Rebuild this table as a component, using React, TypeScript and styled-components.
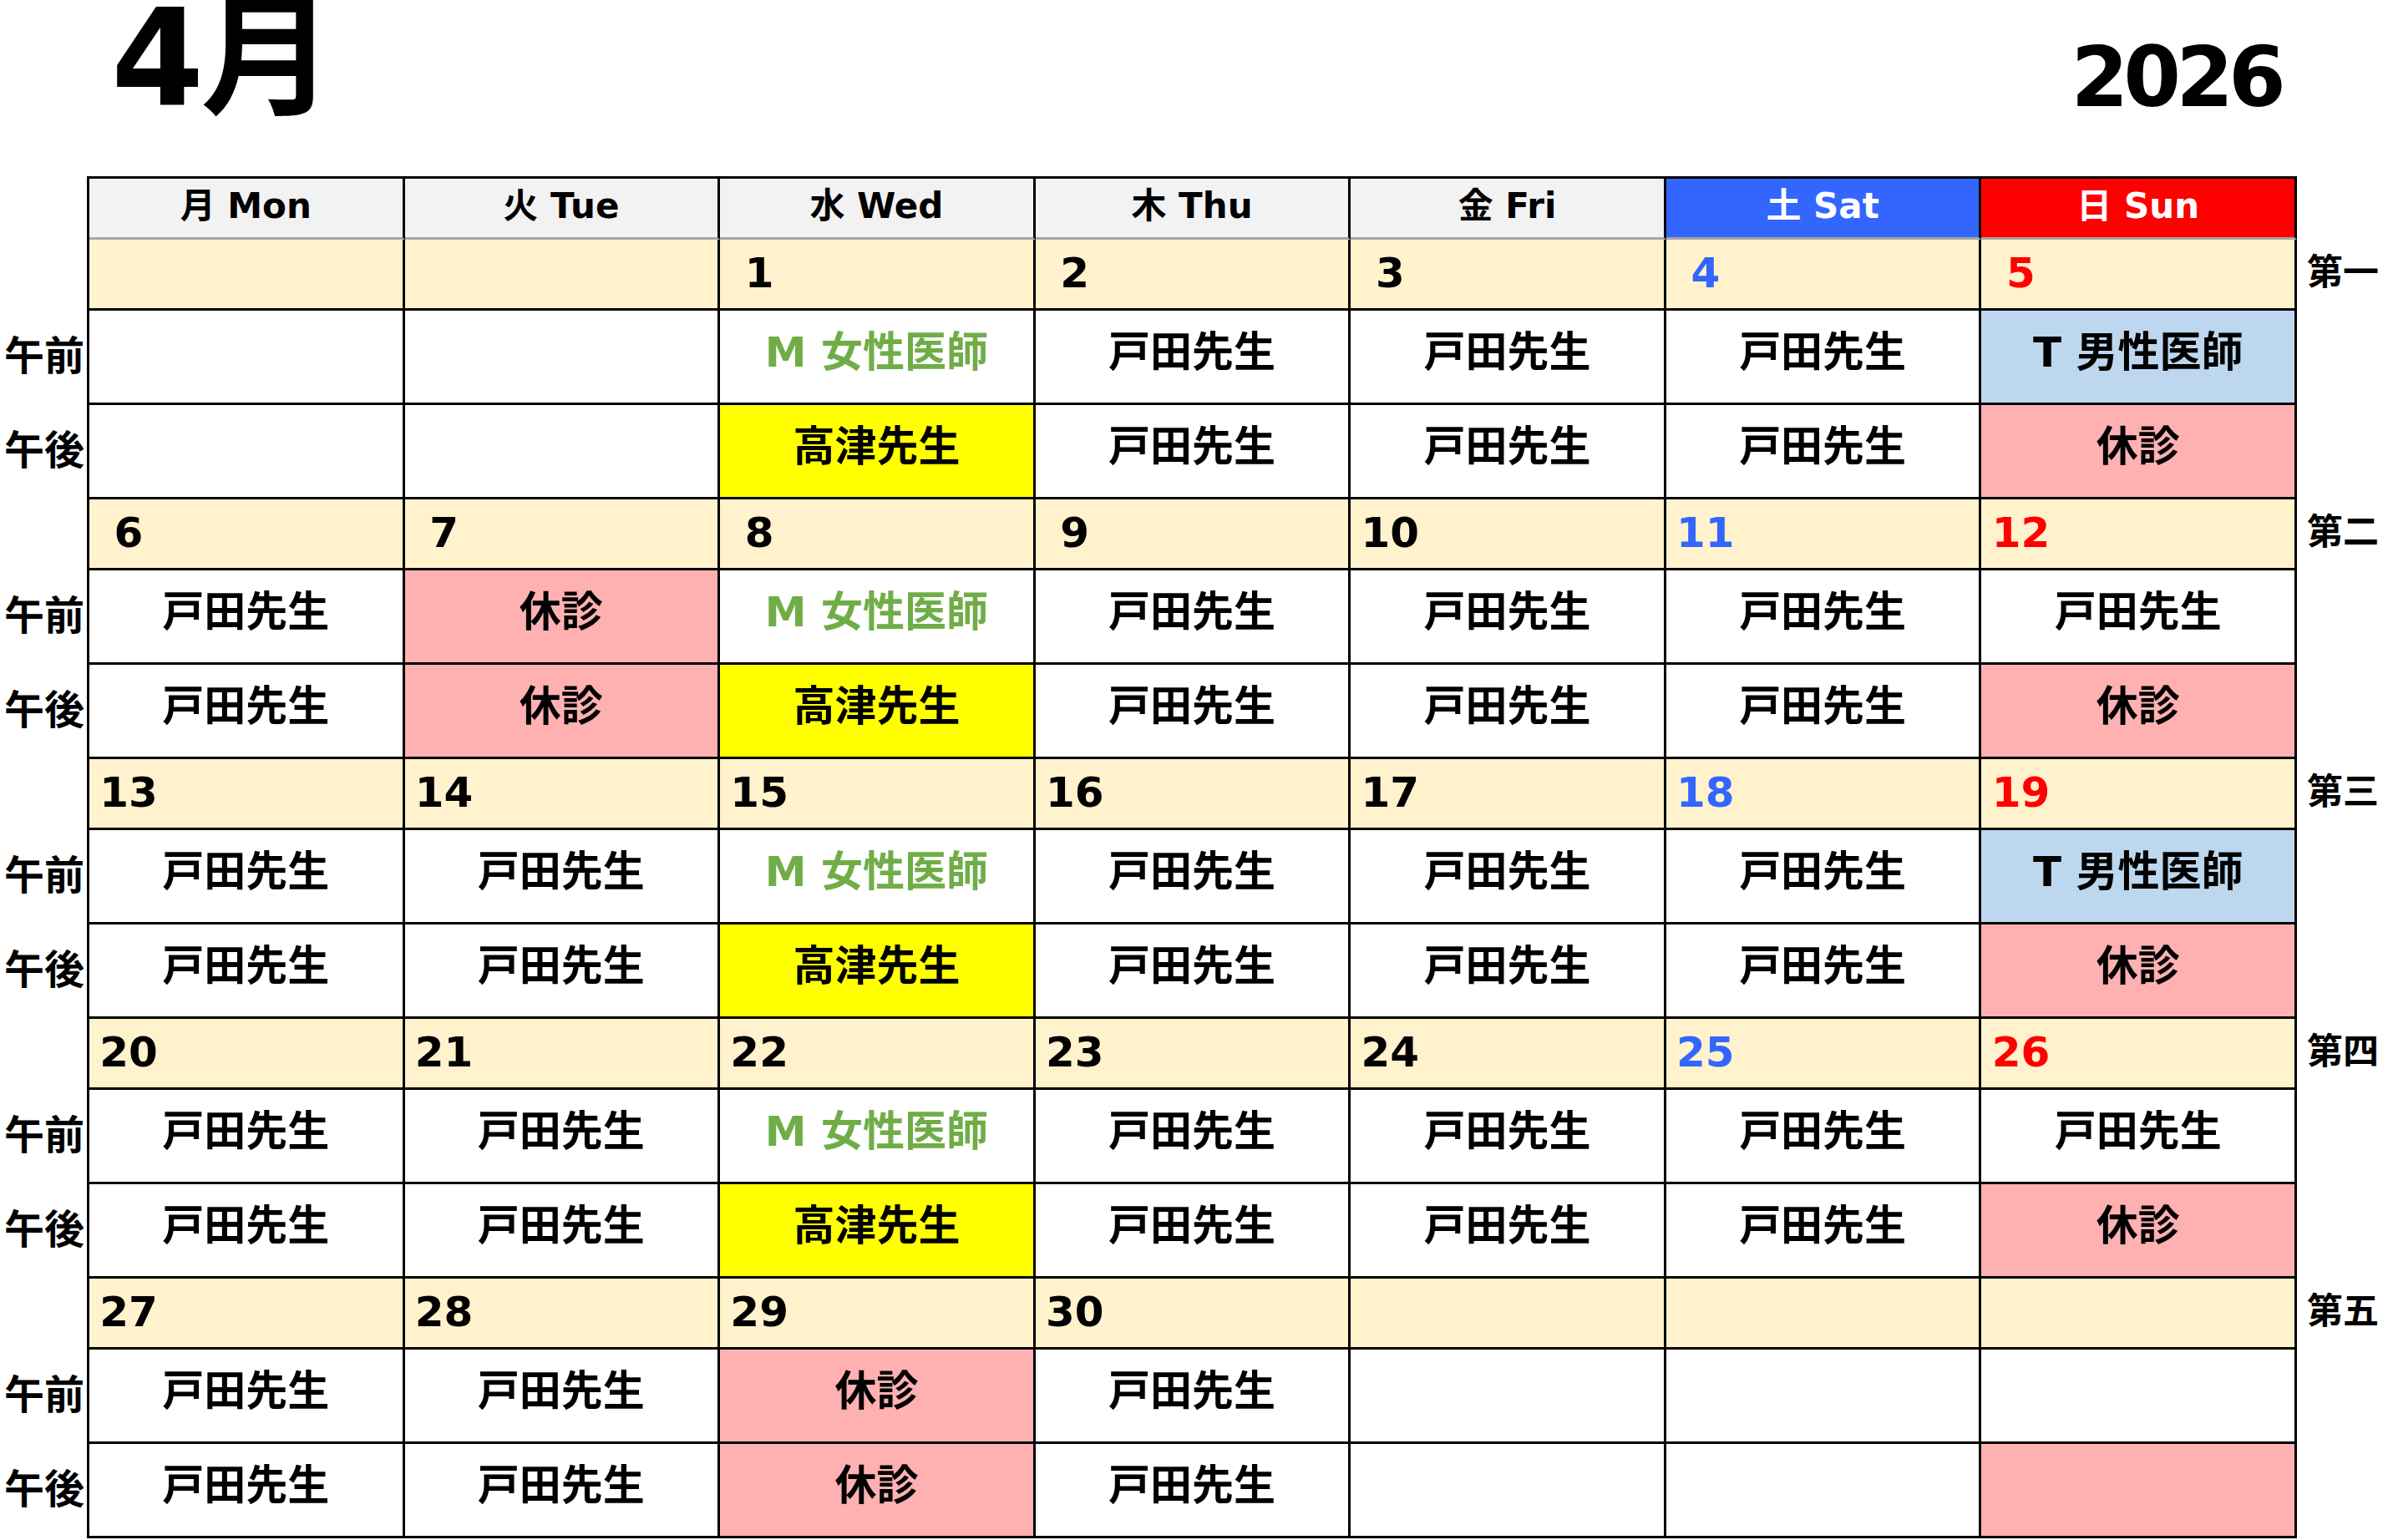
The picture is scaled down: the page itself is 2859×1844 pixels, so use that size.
import styled, { createGlobalStyle } from "styled-components";

type SlotKind = "toda" | "takatsu" | "female" | "male" | "closed" | "closedBlank" | "none";

interface Week {
  label: string;
  days: (number | null)[];
  am: SlotKind[];
  pm: SlotKind[];
}

const FONT = `"DejaVu Sans", "Noto Sans CJK JP", sans-serif`;

const HEADERS = [
  { text: "月 Mon", bg: "#f2f2f2", fg: "#000" },
  { text: "火 Tue", bg: "#f2f2f2", fg: "#000" },
  { text: "水 Wed", bg: "#f2f2f2", fg: "#000" },
  { text: "木 Thu", bg: "#f2f2f2", fg: "#000" },
  { text: "金 Fri", bg: "#f2f2f2", fg: "#000" },
  { text: "土 Sat", bg: "#3366ff", fg: "#fff" },
  { text: "日 Sun", bg: "#ff0000", fg: "#fff" },
];

const WEEKS: Week[] = [
  {
    label: "第一",
    days: [null, null, 1, 2, 3, 4, 5],
    am: ["none", "none", "female", "toda", "toda", "toda", "male"],
    pm: ["none", "none", "takatsu", "toda", "toda", "toda", "closed"],
  },
  {
    label: "第二",
    days: [6, 7, 8, 9, 10, 11, 12],
    am: ["toda", "closed", "female", "toda", "toda", "toda", "toda"],
    pm: ["toda", "closed", "takatsu", "toda", "toda", "toda", "closed"],
  },
  {
    label: "第三",
    days: [13, 14, 15, 16, 17, 18, 19],
    am: ["toda", "toda", "female", "toda", "toda", "toda", "male"],
    pm: ["toda", "toda", "takatsu", "toda", "toda", "toda", "closed"],
  },
  {
    label: "第四",
    days: [20, 21, 22, 23, 24, 25, 26],
    am: ["toda", "toda", "female", "toda", "toda", "toda", "toda"],
    pm: ["toda", "toda", "takatsu", "toda", "toda", "toda", "closed"],
  },
  {
    label: "第五",
    days: [27, 28, 29, 30, null, null, null],
    am: ["toda", "toda", "closed", "toda", "none", "none", "none"],
    pm: ["toda", "toda", "closed", "toda", "none", "none", "closedBlank"],
  },
];

const SLOTS: Record<SlotKind, { text: string; bg: string; fg: string }> = {
  toda: { text: "戸田先生", bg: "#fff", fg: "#000" },
  takatsu: { text: "高津先生", bg: "#ffff00", fg: "#000" },
  female: { text: "M 女性医師", bg: "#fff", fg: "#70ad47" },
  male: { text: "T 男性医師", bg: "#bdd7ee", fg: "#000" },
  closed: { text: "休診", bg: "#ffb1b1", fg: "#000" },
  closedBlank: { text: "", bg: "#ffb1b1", fg: "#000" },
  none: { text: "", bg: "#fff", fg: "#000" },
};

const WEEK_ROWS = "repeat(5, 85px 113px 113px)";

const GlobalStyle = createGlobalStyle`
  html, body {
    margin: 0;
    padding: 0;
    background: #fff;
  }
  body {
    font-family: ${FONT};
    color: #000;
  }
  *, *::before, *::after {
    box-sizing: border-box;
  }
`;

const Page = styled.div`
  width: 2859px;
  height: 1844px;
  overflow: hidden;
`;

const TitleRow = styled.div`
  height: 211px;
  display: flex;
  justify-content: space-between;
  align-items: flex-start;
  padding-top: 4px;
`;

const MonthTitle = styled.div`
  font-size: 160px;
  font-weight: 700;
  line-height: 1;
  margin: -14px 0 0 133px;
  letter-spacing: -4px;
`;

const YearTitle = styled.div`
  font-size: 99px;
  font-weight: 700;
  line-height: 1;
  letter-spacing: -6px;
  margin: 39px 128px 0 0;
`;

const Body = styled.div`
  display: flex;
`;

const SideColumn = styled.div<{ $width: string; $pad: number }>`
  width: ${(p) => p.$width};
  flex: ${(p) => (p.$width === "auto" ? "1" : "none")};
  display: grid;
  grid-template-rows: 76px ${WEEK_ROWS};
  padding-left: ${(p) => p.$pad}px;
`;

const SideLabel = styled.div<{ $size: number }>`
  display: flex;
  align-items: center;
  font-size: ${(p) => p.$size}px;
  font-weight: 700;
  line-height: 1;
  padding-bottom: 6px;
  white-space: nowrap;
`;

const Table = styled.div`
  width: 2646px;
  flex: none;
  display: grid;
  grid-template-columns: repeat(7, 1fr);
  grid-template-rows: 73px ${WEEK_ROWS};
  border-left: 3px solid #000;
  border-top: 3px solid #000;
`;

const HeaderCell = styled.div<{ $bg: string; $fg: string }>`
  background: ${(p) => p.$bg};
  color: ${(p) => p.$fg};
  border-right: 3px solid #000;
  border-bottom: 3px solid #a6a6a6;
  display: flex;
  align-items: center;
  justify-content: center;
  font-size: 42px;
  font-weight: 700;
  line-height: 1;
  padding-bottom: 4px;
`;

const DayCell = styled.div`
  background: #fff2cc;
  border-right: 3px solid #000;
  border-bottom: 3px solid #000;
  display: flex;
  align-items: center;
  padding: 0 0 2px 12px;
`;

const DayNum = styled.span<{ $color: string }>`
  display: inline-block;
  width: 70px;
  text-align: center;
  font-size: 50px;
  font-weight: 700;
  line-height: 1;
  color: ${(p) => p.$color};
`;

const SlotCell = styled.div<{ $bg: string; $fg: string }>`
  background: ${(p) => p.$bg};
  color: ${(p) => p.$fg};
  border-right: 3px solid #000;
  border-bottom: 3px solid #000;
  display: flex;
  align-items: center;
  justify-content: center;
  font-size: 50px;
  font-weight: 700;
  line-height: 1;
  padding-bottom: 10px;
  white-space: nowrap;
`;

const dayColor = (col: number) => (col === 5 ? "#3366ff" : col === 6 ? "#ff0000" : "#000");

export default function App() {
  return (
    <Page>
      <GlobalStyle />
      <TitleRow>
        <MonthTitle>4月</MonthTitle>
        <YearTitle>2026</YearTitle>
      </TitleRow>
      <Body>
        <SideColumn $width="104px" $pad={5}>
          <div />
          {WEEKS.map((w) => [
            <div key={w.label + "d"} />,
            <SideLabel key={w.label + "a"} $size={48}>午前</SideLabel>,
            <SideLabel key={w.label + "p"} $size={48}>午後</SideLabel>,
          ])}
        </SideColumn>
        <Table>
          {HEADERS.map((h) => (
            <HeaderCell key={h.text} $bg={h.bg} $fg={h.fg}>
              {h.text}
            </HeaderCell>
          ))}
          {WEEKS.map((w) => [
            ...w.days.map((d, i) => (
              <DayCell key={w.label + "d" + i}>
                {d !== null && <DayNum $color={dayColor(i)}>{d}</DayNum>}
              </DayCell>
            )),
            ...w.am.map((s, i) => (
              <SlotCell key={w.label + "a" + i} $bg={SLOTS[s].bg} $fg={SLOTS[s].fg}>
                {SLOTS[s].text}
              </SlotCell>
            )),
            ...w.pm.map((s, i) => (
              <SlotCell key={w.label + "p" + i} $bg={SLOTS[s].bg} $fg={SLOTS[s].fg}>
                {SLOTS[s].text}
              </SlotCell>
            )),
          ])}
        </Table>
        <SideColumn $width="auto" $pad={12}>
          <div />
          {WEEKS.map((w) => [
            <SideLabel key={w.label + "d"} $size={43}>{w.label}</SideLabel>,
            <div key={w.label + "a"} />,
            <div key={w.label + "p"} />,
          ])}
        </SideColumn>
      </Body>
    </Page>
  );
}
